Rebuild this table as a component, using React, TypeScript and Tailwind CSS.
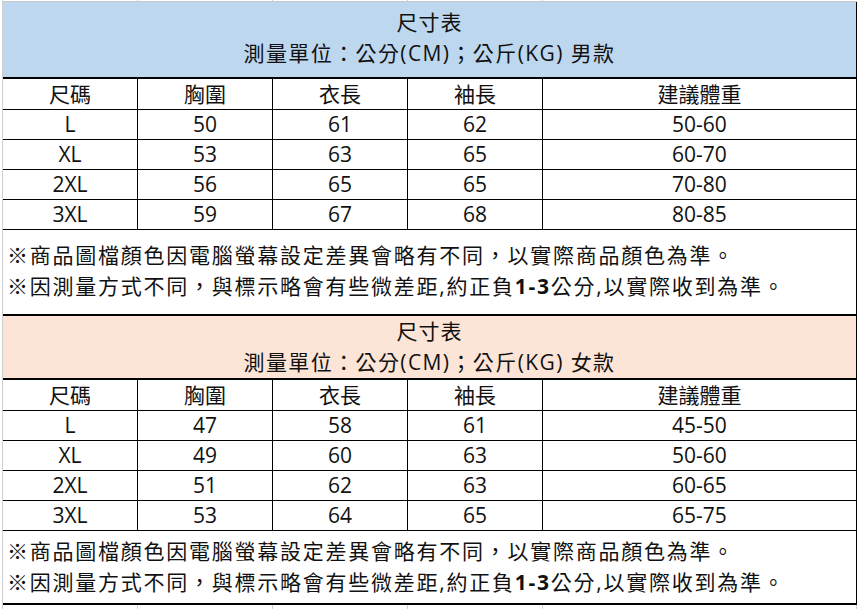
const cols = ["尺碼", "胸圍", "衣長", "袖長", "建議體重"]

const men = [
  ["L", "50", "61", "62", "50-60"],
  ["XL", "53", "63", "65", "60-70"],
  ["2XL", "56", "65", "65", "70-80"],
  ["3XL", "59", "67", "68", "80-85"],
]

const women = [
  ["L", "47", "58", "61", "45-50"],
  ["XL", "49", "60", "63", "50-60"],
  ["2XL", "51", "62", "63", "60-65"],
  ["3XL", "53", "64", "65", "65-75"],
]

function Row({ cells, h }: { cells: string[]; h: string }) {
  return (
    <div className={`grid grid-cols-[135px_135px_135px_135px_1fr] border-b border-black ${h}`}>
      {cells.map((c, i) => (
        <div key={i} className="flex items-center justify-center border-r border-black leading-none">
          {c}
        </div>
      ))}
    </div>
  )
}

function Notes({ pad }: { pad: string }) {
  return (
    <div className={`border-r border-black pl-[4px] leading-[31px] tracking-[1.75px] ${pad}`}>
      <div>※商品圖檔顏色因電腦螢幕設定差異會略有不同，以實際商品顏色為準。</div>
      <div>
        ※因測量方式不同，與標示略會有些微差距,約正負<span className="font-bold">1-3</span>公分,以實際收到為準。
      </div>
    </div>
  )
}

function Section({
  bg,
  label,
  headPad,
  headH,
  rows,
  notesPad,
  notesH,
}: {
  bg: string
  label: string
  headPad: string
  headH: string
  rows: string[][]
  notesPad: string
  notesH: string
}) {
  return (
    <div>
      <div className={`${bg} ${headPad} ${headH} border-r border-black border-b-2 border-b-black text-center leading-[31px]`}>
        <div className="tracking-[1px]">尺寸表</div>
        <div className="tracking-[1.4px]">測量單位：公分(CM)；公斤(KG) {label}</div>
      </div>
      <Row cells={cols} h="h-[31px]" />
      {rows.map((r, i) => (
        <Row key={i} cells={r} h="h-[30px]" />
      ))}
      <div className={`${notesH} border-b-2 border-black`}>
        <Notes pad={`${notesPad} h-full`} />
      </div>
    </div>
  )
}

export default function App() {
  return (
    <div
      className="w-[857px] h-[609px] overflow-hidden bg-white text-[21px] text-[#111]"
      style={{ fontFamily: '"Open Sans", "Noto Sans CJK TC", sans-serif' }}
    >
      <div className="pl-[2px]">
        <div className="border-l border-[#d0d0d0]">
          <div className="grid h-[2px] grid-cols-[135px_135px_135px_135px_1fr] border-b border-[#c8c8c8]">
            <div className="border-r border-[#d0d0d0]" />
            <div className="border-r border-[#d0d0d0]" />
            <div className="border-r border-[#d0d0d0]" />
            <div className="border-r border-[#d0d0d0]" />
            <div />
          </div>
          <Section
            bg="bg-[#bdd7ee]"
            label="男款"
            headPad="pt-[5px]"
            headH="h-[77px]"
            rows={men}
            notesPad="pt-[10px]"
            notesH="h-[86px]"
          />
          <Section
            bg="bg-[#fce4d6]"
            label="女款"
            headPad="pt-0"
            headH="h-[64px]"
            rows={women}
            notesPad="pt-[5px]"
            notesH="h-[74px]"
          />
          <div className="grid h-[10px] grid-cols-[135px_135px_135px_135px_1fr]">
            <div className="border-r border-[#d0d0d0]" />
            <div className="border-r border-[#d0d0d0]" />
            <div className="border-r border-[#d0d0d0]" />
            <div className="border-r border-[#d0d0d0]" />
            <div className="border-r border-[#d0d0d0]" />
          </div>
        </div>
      </div>
    </div>
  )
}
